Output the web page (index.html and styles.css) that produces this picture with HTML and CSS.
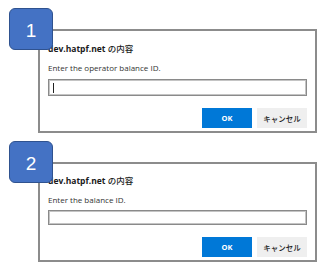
FILE: index.html
```html
<!DOCTYPE html>
<html lang="ja">
<head>
<meta charset="utf-8">
<link rel="stylesheet" href="styles.css">
</head>
<body>
<div class="page">
  <section class="step">
    <div class="badge">1</div>
    <div class="dialog">
      <div class="title">dev.hatpf.net <span class="title-suffix">の内容</span></div>
      <div class="message">Enter the operator balance ID.</div>
      <div class="field"><span class="caret"></span></div>
      <div class="actions">
        <span class="btn btn-ok">OK</span>
        <span class="btn btn-cancel">キャンセル</span>
      </div>
    </div>
  </section>
  <section class="step step-compact">
    <div class="badge">2</div>
    <div class="dialog">
      <div class="title">dev.hatpf.net <span class="title-suffix">の内容</span></div>
      <div class="message">Enter the balance ID.</div>
      <div class="field"></div>
      <div class="actions">
        <span class="btn btn-ok">OK</span>
        <span class="btn btn-cancel">キャンセル</span>
      </div>
    </div>
  </section>
</div>
</body>
</html>
```

FILE: styles.css
```css
html, body {
  margin: 0;
  padding: 0;
  background: #ffffff;
}

.page {
  width: 320px;
  height: 266px;
  padding-top: 29px;
  box-sizing: border-box;
  display: flex;
  flex-direction: column;
  gap: 29px;
  font-family: "Open Sans", "Noto Sans", "Noto Sans CJK JP", sans-serif;
}

.step {
  position: relative;
  margin-left: 38px;
  width: 279px;
}

.badge {
  position: absolute;
  left: -29px;
  top: -21px;
  width: 44px;
  height: 42px;
  box-sizing: border-box;
  background: #4472c4;
  border: 1px solid #2f528f;
  border-radius: 6px;
  color: #ffffff;
  font-family: "Liberation Sans", "Noto Sans", sans-serif;
  font-size: 19px;
  display: flex;
  align-items: center;
  justify-content: center;
  padding-top: 4px;
  z-index: 2;
}

.dialog {
  height: 104px;
  box-sizing: border-box;
  border: 2px solid #8c8c8c;
  background: #ffffff;
  padding: 11px 8px 0 8px;
  display: flex;
  flex-direction: column;
}

.step-compact .dialog {
  height: 100px;
  padding-top: 10px;
}

.title {
  font-weight: 700;
  font-size: 8.5px;
  line-height: 12px;
  color: #1a1a1a;
  font-family: "Open Sans", "Noto Sans CJK JP", sans-serif;
}

.title-suffix {
  font-weight: 500;
  font-family: "Noto Sans CJK JP", sans-serif;
}

.message {
  margin-top: 7px;
  font-size: 8px;
  line-height: 12px;
  color: #333333;
}

.field {
  margin-top: 5px;
  height: 17px;
  box-sizing: border-box;
  border: 1px solid #8a8a8a;
  box-shadow: inset 0 0 0 1px #c4c4c4;
  display: flex;
  align-items: center;
  padding-left: 4px;
}

.step-compact .field {
  margin-top: 4px;
  height: 15px;
}

.caret {
  width: 1px;
  height: 10px;
  background: #222222;
}

.actions {
  margin-top: 12px;
  display: flex;
  justify-content: flex-end;
  gap: 5px;
}

.btn {
  width: 50px;
  height: 20px;
  display: flex;
  align-items: center;
  justify-content: center;
  font-size: 7.5px;
  font-weight: 700;
}

.btn-ok {
  background: #0078d7;
  color: #ffffff;
}

.btn-cancel {
  background: #efefef;
  color: #222222;
  font-weight: 500;
  font-family: "Noto Sans CJK JP", sans-serif;
}
```
